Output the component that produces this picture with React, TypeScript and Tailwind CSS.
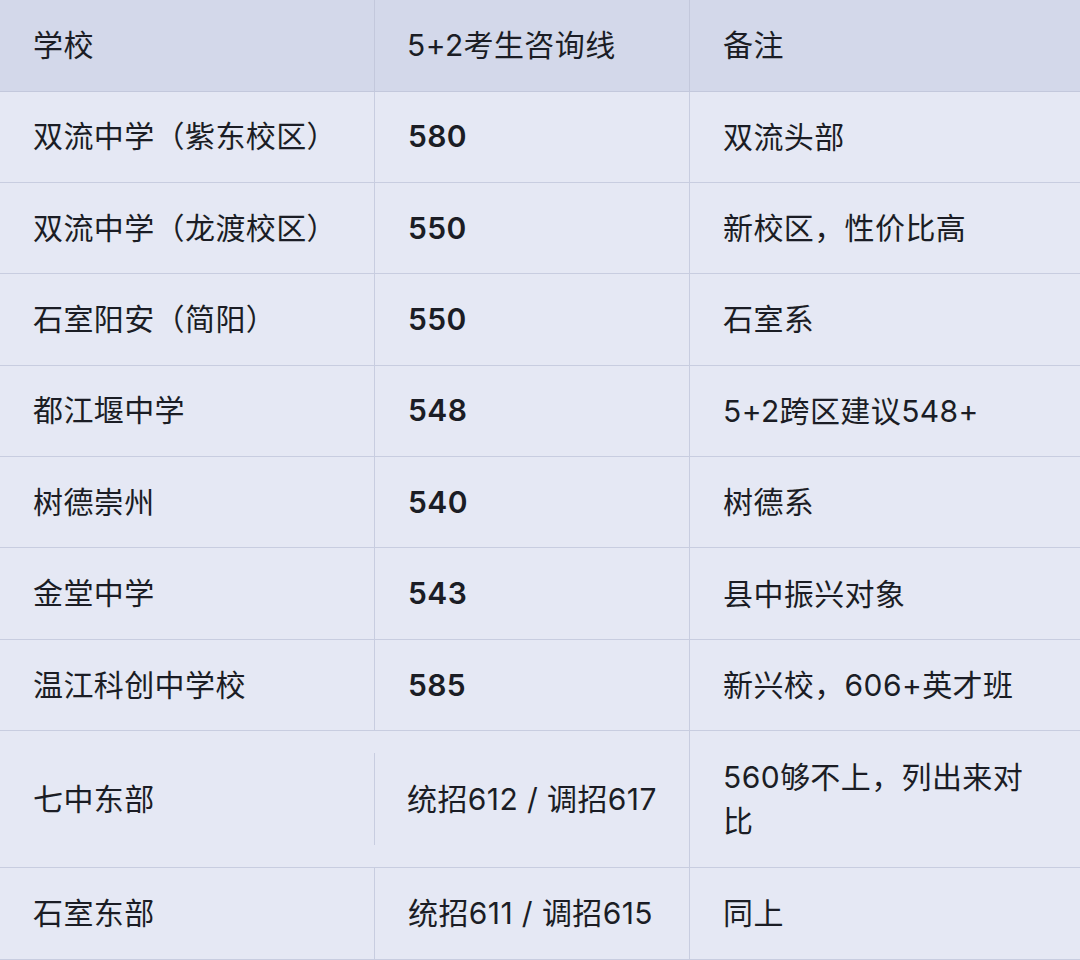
import React from 'react';

interface Row {
  school: string;
  score: string;
  bold: boolean;
  note: string;
  tall?: boolean;
}

const rows: Row[] = [
  { school: '双流中学（紫东校区）', score: '580', bold: true, note: '双流头部' },
  { school: '双流中学（龙渡校区）', score: '550', bold: true, note: '新校区，性价比高' },
  { school: '石室阳安（简阳）', score: '550', bold: true, note: '石室系' },
  { school: '都江堰中学', score: '548', bold: true, note: '5+2跨区建议548+' },
  { school: '树德崇州', score: '540', bold: true, note: '树德系' },
  { school: '金堂中学', score: '543', bold: true, note: '县中振兴对象' },
  { school: '温江科创中学校', score: '585', bold: true, note: '新兴校，606+英才班' },
  { school: '七中东部', score: '统招612 / 调招617', bold: false, note: '560够不上，列出来对比', tall: true },
  { school: '石室东部', score: '统招611 / 调招615', bold: false, note: '同上' },
];

const font = { fontFamily: 'Inter, "Noto Sans CJK SC", "Noto Sans", sans-serif' };

export default function App() {
  return (
    <div className="w-[1080px] h-[960px] overflow-hidden bg-[#e5e8f4] text-[#1b1d25] text-[30px] tracking-[0.4px]" style={font}>
      <div className="grid grid-cols-[375px_315px_390px]">
        {/* Header */}
        <div className="h-[91.5px] flex items-center pl-[33px] bg-[#d3d8ea] border-b border-r border-[#c3c8dc]">学校</div>
        <div className="h-[91.5px] flex items-center pl-[32px] bg-[#d3d8ea] border-b border-r border-[#c3c8dc]">5+2考生咨询线</div>
        <div className="h-[91.5px] flex items-center pl-[33px] bg-[#d3d8ea] border-b border-[#c3c8dc]">备注</div>

        {rows.map((r) => (
          <React.Fragment key={r.school}>
            <div
              className={`${r.tall ? 'h-[137px]' : 'h-[91.4px]'} flex items-center pl-[33px] border-b border-[#c8cde0] ${r.tall ? '' : 'border-r'}`}
            >
              {r.school}
            </div>
            <div className={`${r.tall ? 'h-[137px]' : 'h-[91.4px]'} flex items-center border-b border-r border-[#c8cde0]`}>
              {r.tall && <div className="w-px h-[92px] -ml-px bg-[#c8cde0] shrink-0" />}
              <span className={`${r.tall ? 'pl-[32px]' : 'pl-[33px]'} ${r.bold ? 'font-semibold' : ''}`}>{r.score}</span>
            </div>
            <div
              className={`${r.tall ? 'h-[137px]' : 'h-[91.4px]'} flex items-center pl-[33px] pr-[40px] border-b border-[#c8cde0] leading-[44px]`}
            >
              {r.note}
            </div>
          </React.Fragment>
        ))}
      </div>
    </div>
  );
}
